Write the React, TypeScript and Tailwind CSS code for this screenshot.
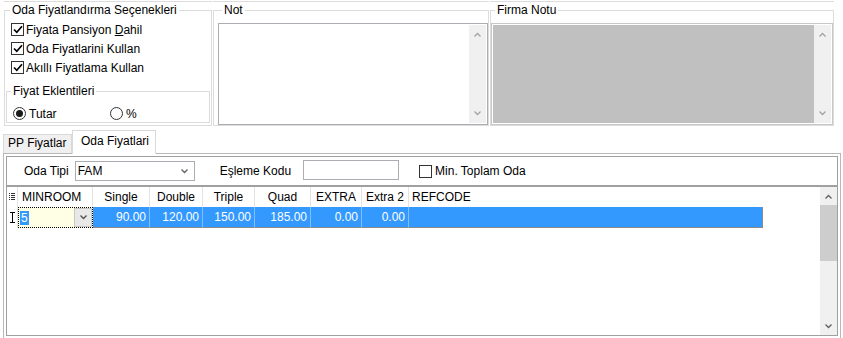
import React from "react";

const font = "font-['Liberation_Sans',Arial,sans-serif]";

function Chevron({ up = false, color = "#a3a3a3" }: { up?: boolean; color?: string }) {
  return (
    <svg width="7" height="5" viewBox="0 0 7 5" className="block">
      <polyline
        points={up ? "0.5,4.5 3.5,1.5 6.5,4.5" : "0.5,0.5 3.5,3.5 6.5,0.5"}
        fill="none"
        stroke={color}
        strokeWidth="1.3"
      />
    </svg>
  );
}

function CheckBox({ checked }: { checked: boolean }) {
  return (
    <span className="flex h-[13px] w-[13px] shrink-0 items-center justify-center border border-[#333333] bg-white">
      {checked && (
        <svg width="10" height="9" viewBox="0 0 10 9">
          <polyline points="1,4.5 3.8,7.3 9,1.2" fill="none" stroke="#000" strokeWidth="1.7" />
        </svg>
      )}
    </span>
  );
}

function Radio({ checked }: { checked: boolean }) {
  return (
    <span className="flex h-[13px] w-[13px] shrink-0 items-center justify-center rounded-full border border-[#333333] bg-white">
      {checked && <span className="h-[7px] w-[7px] rounded-full bg-[#1a1a1a]" />}
    </span>
  );
}

function MemoScroll() {
  return (
    <div className="flex w-[17px] flex-col items-center justify-between bg-[#f0f0f0] py-[7px]">
      <Chevron up />
      <Chevron />
    </div>
  );
}

const columns = [
  { key: "MINROOM", w: "w-[75px]", align: "left" },
  { key: "Single", w: "w-[57px]", value: "90.00" },
  { key: "Double", w: "w-[53px]", value: "120.00" },
  { key: "Triple", w: "w-[52px]", value: "150.00" },
  { key: "Quad", w: "w-[56px]", value: "185.00" },
  { key: "EXTRA", w: "w-[51px]", value: "0.00" },
  { key: "Extra 2", w: "w-[47px]", value: "0.00" },
];

export default function App() {
  return (
    <div className={`${font} relative h-[338px] w-[843px] overflow-hidden bg-white text-[12px] leading-[14px] text-black`}>
      {/* bottoms of the boxes above */}
      <div className="flex pt-[1px]">
        <div className="ml-[4px] h-px w-[208px] bg-[#dcdcdc]" />
        <div className="ml-[1px] h-px w-[276px] bg-[#dcdcdc]" />
        <div className="ml-[1px] h-px w-[344px] bg-[#dcdcdc]" />
      </div>

      <div className="mt-[1px] flex">
        <fieldset className="ml-[4px] h-[123px] w-[208px] border border-[#dcdcdc]">
          <legend className="ml-[5px] px-[2px]">Oda Fiyatlandırma Seçenekleri</legend>
          <div className="flex flex-col pl-[6px] pt-[3px]">
            <div className="flex h-[19px] items-center gap-[2px]">
              <CheckBox checked />
              <span>
                Fiyata Pansiyon <span className="underline">D</span>ahil
              </span>
            </div>
            <div className="flex h-[19px] items-center gap-[2px]">
              <CheckBox checked />
              <span>Oda Fiyatlarini Kullan</span>
            </div>
            <div className="flex h-[19px] items-center gap-[2px]">
              <CheckBox checked />
              <span>Akıllı Fiyatlama Kullan</span>
            </div>
          </div>
          <fieldset className="ml-[1px] mt-[7px] h-[39px] w-[204px] border border-[#dcdcdc]">
            <legend className="ml-[4px] px-[2px]">Fiyat Eklentileri</legend>
            <div className="flex pl-[6px] pt-[9px]">
              <div className="flex h-[13px] w-[97px] items-center gap-[3px]">
                <Radio checked />
                <span>Tutar</span>
              </div>
              <div className="flex h-[13px] items-center gap-[3px]">
                <Radio checked={false} />
                <span>%</span>
              </div>
            </div>
          </fieldset>
        </fieldset>

        <fieldset className="ml-[1px] flex h-[123px] w-[276px] border border-[#dcdcdc]">
          <legend className="ml-[8px] px-[2px]">Not</legend>
          <div className="ml-[4px] mt-[6px] flex h-[102px] flex-1 border border-[#abadb3] bg-white p-[1px]">
            <div className="flex-1 bg-white" />
            <MemoScroll />
          </div>
        </fieldset>

        <fieldset className="ml-[1px] flex h-[123px] w-[344px] border border-[#dcdcdc]">
          <legend className="ml-[4px] px-[2px]">Firma Notu</legend>
          <div className="mt-[6px] flex h-[102px] flex-1 border border-[#c8c8c8] bg-white p-[1px]">
            <div className="flex-1 bg-[#c0c0c0]" />
            <MemoScroll />
          </div>
        </fieldset>
      </div>

      {/* tabs */}
      <div className="mt-[4px] flex h-[23px] items-end pl-[3px]">
        <div className="h-[19px] w-[69px] border border-b-0 border-[#d9d9d9] bg-[#f0f0f0] pl-[4px] pt-[1px]">
          PP Fiyatlar
        </div>
        <div className="relative z-10 -mb-px h-[24px] w-[84px] border border-b-0 border-[#d9d9d9] bg-white pl-[8px] pt-[3px]">
          Oda Fiyatlari
        </div>
      </div>

      <div className="ml-[3px] h-[190px] w-[838px] border border-b-0 border-[#b9b9b9] p-[2px]">
        <div className="flex h-[180px] flex-col border border-[#a0a0a0]">
          {/* filter bar */}
          <div className="flex h-[28px] items-center pl-[17px]">
            <span>Oda Tipi</span>
            <div className="ml-[6px] flex h-[20px] w-[120px] items-center justify-between border border-[#abadb3] bg-white pl-[2px] pr-[6px]">
              <span>FAM</span>
              <Chevron color="#606060" />
            </div>
            <span className="ml-[25px]">Eşleme Kodu</span>
            <div className="ml-[12px] h-[20px] w-[96px] -translate-y-px border border-[#abadb3] bg-white" />
            <div className="ml-[20px] flex items-center gap-[3px]">
              <CheckBox checked={false} />
              <span>Min. Toplam Oda</span>
            </div>
          </div>

          {/* grid */}
          <div className="flex flex-1 border-t-2 border-[#a0a0a0]">
            <div className="flex-1">
              <div className="flex h-[20px] items-center">
                <div className="flex h-full w-[11px] items-center justify-center border-r border-[#e3e3e3]">
                  <svg width="6" height="8" viewBox="0 0 6 8">
                    <rect x="0" y="0" width="1" height="1" fill="#333" />
                    <rect x="2" y="0" width="4" height="1" fill="#333" />
                    <rect x="0" y="2" width="1" height="1" fill="#333" />
                    <rect x="2" y="2" width="4" height="1" fill="#333" />
                    <rect x="0" y="4" width="1" height="1" fill="#333" />
                    <rect x="2" y="4" width="4" height="1" fill="#333" />
                    <rect x="0" y="6" width="1" height="1" fill="#333" />
                    <rect x="2" y="6" width="4" height="1" fill="#333" />
                  </svg>
                </div>
                {columns.map((c) => (
                  <div
                    key={c.key}
                    className={`${c.w} flex h-full items-center border-r border-[#e3e3e3] ${
                      c.align === "left" ? "pl-[4px]" : "justify-center"
                    }`}
                  >
                    {c.key}
                  </div>
                ))}
                <div className="flex h-full w-[354px] items-center pl-[3px]">REFCODE</div>
              </div>

              <div className="flex h-[21px]">
                <div className="flex w-[11px] items-center justify-center border-r border-[#e3e3e3]">
                  <svg width="5" height="11" viewBox="0 0 5 11">
                    <path d="M0 0.5h5M2.5 0.5v10M0 10.5h5" stroke="#000" strokeWidth="1" fill="none" />
                  </svg>
                </div>
                <div className="flex w-[75px] border border-dotted border-black bg-[#ffffe6]">
                  <div className="flex flex-1 items-center pl-[1px]">
                    <span className="bg-[#3399ff] px-[1px] text-white">5</span>
                  </div>
                  <div className="flex w-[18px] items-center justify-center border border-[#c8c8c8] bg-[#e8e8e8]">
                    <Chevron color="#505050" />
                  </div>
                </div>
                {columns.slice(1).map((c) => (
                  <div
                    key={c.key}
                    className={`${c.w} flex items-center justify-end border-b border-r border-b-[#8a8a8a] border-r-[#7fbfff] bg-[#3399ff] pr-[3px] text-white`}
                  >
                    {c.value}
                  </div>
                ))}
                <div className="w-[354px] border-b border-r border-[#8a8a8a] bg-[#3399ff]" />
              </div>
            </div>

            <div className="flex w-[17px] flex-col bg-[#f0f0f0]">
              <div className="flex h-[18px] items-center justify-center">
                <Chevron up color="#606060" />
              </div>
              <div className="h-[56px] bg-[#cdcdcd]" />
              <div className="flex-1" />
              <div className="flex h-[18px] items-center justify-center">
                <Chevron color="#606060" />
              </div>
            </div>
          </div>
        </div>
      </div>
    </div>
  );
}
